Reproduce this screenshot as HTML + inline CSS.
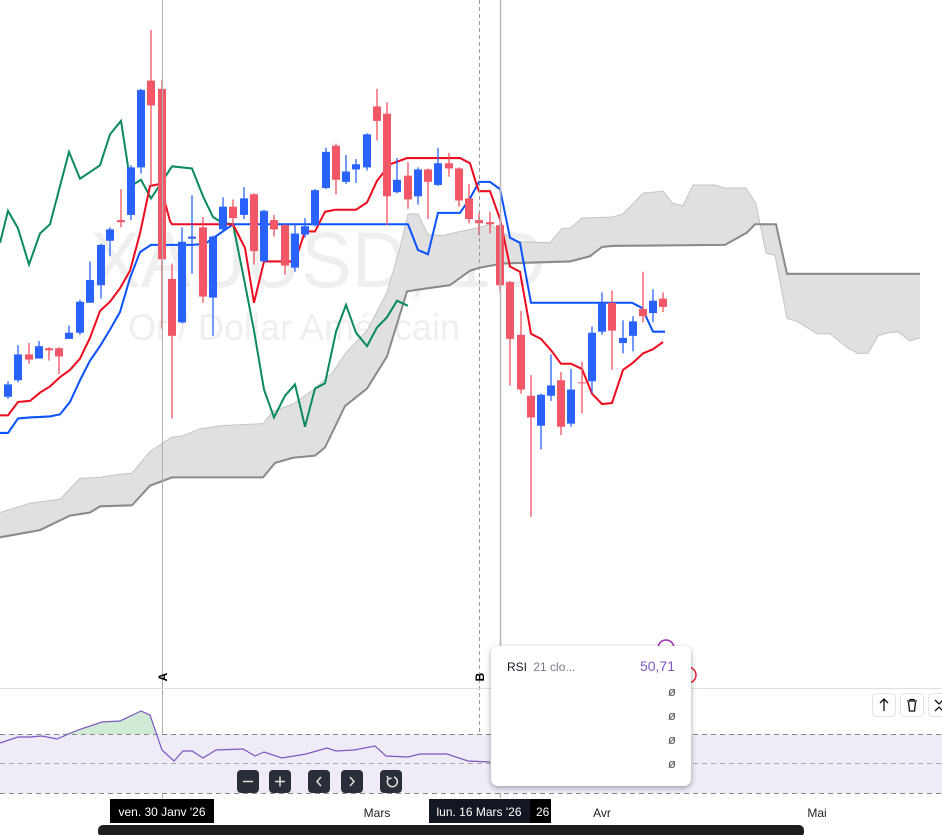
<!DOCTYPE html>
<html><head><meta charset="utf-8"><style>
html,body{margin:0;padding:0;background:#fff;width:942px;height:835px;overflow:hidden;font-family:"Liberation Sans",sans-serif}
svg{position:absolute;left:0;top:0}
.cd rect{stroke:none}
</style></head><body>
<svg width="942" height="835" viewBox="0 0 942 835" xmlns="http://www.w3.org/2000/svg">
<g transform="scale(1 1.0333)">
<text x="90" y="278" font-family="Liberation Sans,sans-serif" font-size="76" fill="#efefef">XAUUSD, 1D</text>
<text x="128" y="329" font-family="Liberation Sans,sans-serif" font-size="36" fill="#efefef">Or / Dollar Américain</text>
<path fill="#e0e0e0" stroke="none" d="M0,496 L20,490 L30,487 L60,483 L80,463 L100,462 L120,459 L132,458 L150,437 L172,423 L182,422 L200,415 L220,412 L263,410 L273,398 L293,391 L315,376 L333,360 L347,340 L367,320 L387,283 L400,240 L408,207 L418,207 L428,227 L443,228 L460,224 L480,220 L490,217 L510,230 L520,234 L550,235 L562,221 L570,221 L582,211 L613,210 L623,207 L633,197 L643,187 L663,185 L673,197 L683,199 L693,179 L715,179 L725,182 L746,182 L756,197 L766,245 L775,247 L787,308 L797,311 L817,323 L830,323 L848,337 L858,342 L868,342 L878,325 L888,322 L898,321 L910,330 L920,327 L920,265 L787,265 L776,217 L755,217 L747,225 L725,237 L612,238 L602,239 L590,248 L570,253 L503,255 L480,259 L470,262 L460,269 L450,276 L420,280 L407,282 L387,345 L367,376 L345,393 L325,433 L315,441 L293,443 L275,448 L263,462 L172,462 L150,470 L132,489 L100,490 L90,496 L70,499 L40,513 L0,520 Z"/>
<path fill="none" stroke="#c4c4c4" stroke-width="1" d="M0,496 L20,490 L30,487 L60,483 L80,463 L100,462 L120,459 L132,458 L150,437 L172,423 L182,422 L200,415 L220,412 L263,410 L273,398 L293,391 L315,376 L333,360 L347,340 L367,320 L387,283 L400,240 L408,207 L418,207 L428,227 L443,228 L460,224 L480,220 L490,217 L510,230 L520,234 L550,235 L562,221 L570,221 L582,211 L613,210 L623,207 L633,197 L643,187 L663,185 L673,197 L683,199 L693,179 L715,179 L725,182 L746,182 L756,197 L766,245 L775,247 L787,308 L797,311 L817,323 L830,323 L848,337 L858,342 L868,342 L878,325 L888,322 L898,321 L910,330 L920,327"/>
<path fill="none" stroke="#8a8a8a" stroke-width="2" d="M0,520 L40,513 L70,499 L90,496 L100,490 L132,489 L150,470 L172,462 L263,462 L275,448 L293,443 L315,441 L325,433 L345,393 L367,376 L387,345 L407,282 L420,280 L450,276 L460,269 L470,262 L480,259 L503,255 L570,253 L590,248 L602,239 L612,238 L725,237 L747,225 L755,217 L776,217 L787,265 L920,265"/>
<polyline fill="none" stroke="#0a8a5e" stroke-width="2" points="0,235 8,204 18,221 29,256 40,226 50,217 69,147 80,173 100,160 110,130 121,117 131,180 141,174 151,192 172,161 192,163 203,190 213,210 223,216 233,217 244,270 254,320 264,377 274,404 285,383 295,372 305,413 315,376 325,371 336,321 346,295 356,322 367,335 377,317 387,307 397,291 408,296"/>
<polyline fill="none" stroke="#0a52ff" stroke-width="2" points="0,419 8,419 18,405 30,404 50,403 60,401 70,389 80,368 90,349 100,335 110,319 120,302 130,269 140,244 151,237 192,237 205,236 233,217 240,217 408,217 418,242 428,246 438,206 460,206 470,192 479,176 490,176 500,183 510,230 520,235 531,293 540,293 632,293 642,298 653,321 665,321"/>
<polyline fill="none" stroke="#ee0a1e" stroke-width="2" points="0,402 8,402 18,389 30,388 40,380 50,374 60,365 70,358 80,347 90,327 100,301 110,292 120,279 130,262 140,226 150,180 160,178 170,214 172,217 233,217 245,240 254,293 264,253 295,253 305,224 315,224 325,205 335,203 356,203 367,196 377,175 390,159 407,153 460,153 470,158 477,180 479,185 490,185 500,212 510,258 520,263 531,323 541,328 551,339 561,352 571,352 582,357 592,381 602,391 612,390 623,358 633,351 643,342 653,338 663,331"/>
<g stroke-width="1.3" class="cd">
<g fill="#2962ff" stroke="#2962ff">
<line x1="8" y1="369" x2="8" y2="386"/><rect x="4" y="372" width="8" height="12"/>
<line x1="18" y1="334" x2="18" y2="370"/><rect x="14" y="343" width="8" height="25"/>
<line x1="39" y1="330" x2="39" y2="347"/><rect x="35" y="335" width="8" height="12"/>
<line x1="69" y1="315" x2="69" y2="328"/><rect x="65" y="322" width="8" height="6"/>
<line x1="80" y1="290" x2="80" y2="324"/><rect x="76" y="292" width="8" height="30"/>
<line x1="90" y1="253" x2="90" y2="293"/><rect x="86" y="271" width="8" height="22"/>
<line x1="101" y1="236" x2="101" y2="289"/><rect x="97" y="237" width="8" height="39"/>
<line x1="110" y1="220" x2="110" y2="248"/><rect x="106" y="222" width="8" height="11"/>
<line x1="131" y1="160" x2="131" y2="213"/><rect x="127" y="162" width="8" height="46"/>
<line x1="141" y1="86" x2="141" y2="168"/><rect x="137" y="87" width="8" height="75"/>
<line x1="182" y1="220" x2="182" y2="313"/><rect x="178" y="234" width="8" height="78"/>
<line x1="192" y1="189" x2="192" y2="265"/><rect x="188" y="229" width="8" height="2"/>
<line x1="213" y1="228" x2="213" y2="325"/><rect x="209" y="229" width="8" height="59"/>
<line x1="223" y1="191" x2="223" y2="225"/><rect x="219" y="200" width="8" height="22"/>
<line x1="244" y1="181" x2="244" y2="212"/><rect x="240" y="192" width="8" height="16"/>
<line x1="264" y1="203" x2="264" y2="254"/><rect x="260" y="204" width="8" height="49"/>
<line x1="295" y1="216" x2="295" y2="263"/><rect x="291" y="226" width="8" height="33"/>
<line x1="305" y1="211" x2="305" y2="230"/><rect x="301" y="219" width="8" height="8"/>
<line x1="315" y1="183" x2="315" y2="219"/><rect x="311" y="184" width="8" height="34"/>
<line x1="326" y1="143" x2="326" y2="183"/><rect x="322" y="147" width="8" height="35"/>
<line x1="346" y1="150" x2="346" y2="178"/><rect x="342" y="166" width="8" height="10"/>
<line x1="356" y1="154" x2="356" y2="177"/><rect x="352" y="159" width="8" height="5"/>
<line x1="367" y1="129" x2="367" y2="165"/><rect x="363" y="130" width="8" height="32"/>
<line x1="397" y1="153" x2="397" y2="187"/><rect x="393" y="174" width="8" height="12"/>
<line x1="418" y1="162" x2="418" y2="198"/><rect x="414" y="164" width="8" height="26"/>
<line x1="438" y1="143" x2="438" y2="180"/><rect x="434" y="158" width="8" height="21"/>
<line x1="541" y1="381" x2="541" y2="435"/><rect x="537" y="382" width="8" height="30"/>
<line x1="551" y1="343" x2="551" y2="388"/><rect x="547" y="373" width="8" height="10"/>
<line x1="571" y1="357" x2="571" y2="413"/><rect x="567" y="377" width="8" height="33"/>
<line x1="592" y1="316" x2="592" y2="380"/><rect x="588" y="322" width="8" height="47"/>
<line x1="602" y1="283" x2="602" y2="324"/><rect x="598" y="293" width="8" height="28"/>
<line x1="623" y1="310" x2="623" y2="342"/><rect x="619" y="327" width="8" height="5"/>
<line x1="633" y1="306" x2="633" y2="340"/><rect x="629" y="311" width="8" height="14"/>
<line x1="653" y1="280" x2="653" y2="312"/><rect x="649" y="291" width="8" height="12"/>
</g>
<g fill="#f25767" stroke="#f05060">
<line x1="29" y1="332" x2="29" y2="352"/><rect x="25" y="343" width="8" height="5"/>
<line x1="49" y1="336" x2="49" y2="349"/><rect x="45" y="337" width="8" height="2"/>
<line x1="59" y1="336" x2="59" y2="362"/><rect x="55" y="337" width="8" height="8"/>
<line x1="121" y1="183" x2="121" y2="220"/><rect x="117" y="213" width="8" height="2"/>
<line x1="151" y1="29" x2="151" y2="180"/><rect x="147" y="78" width="8" height="24"/>
<line x1="162" y1="77" x2="162" y2="318"/><rect x="158" y="86" width="8" height="165"/>
<line x1="172" y1="255" x2="172" y2="405"/><rect x="168" y="270" width="8" height="55"/>
<line x1="203" y1="210" x2="203" y2="293"/><rect x="199" y="220" width="8" height="67"/>
<line x1="233" y1="193" x2="233" y2="220"/><rect x="229" y="200" width="8" height="11"/>
<line x1="254" y1="187" x2="254" y2="256"/><rect x="250" y="188" width="8" height="55"/>
<line x1="274" y1="208" x2="274" y2="229"/><rect x="270" y="213" width="8" height="9"/>
<line x1="285" y1="217" x2="285" y2="266"/><rect x="281" y="218" width="8" height="39"/>
<line x1="336" y1="139" x2="336" y2="188"/><rect x="332" y="141" width="8" height="33"/>
<line x1="377" y1="86" x2="377" y2="136"/><rect x="373" y="103" width="8" height="14"/>
<line x1="387" y1="99" x2="387" y2="218"/><rect x="383" y="110" width="8" height="80"/>
<line x1="408" y1="157" x2="408" y2="202"/><rect x="404" y="170" width="8" height="23"/>
<line x1="428" y1="163" x2="428" y2="212"/><rect x="424" y="164" width="8" height="12"/>
<line x1="449" y1="148" x2="449" y2="171"/><rect x="445" y="158" width="8" height="5"/>
<line x1="459" y1="162" x2="459" y2="200"/><rect x="455" y="163" width="8" height="31"/>
<line x1="469" y1="178" x2="469" y2="216"/><rect x="465" y="192" width="8" height="20"/>
<line x1="479" y1="206" x2="479" y2="228"/><rect x="475" y="213" width="8" height="3"/>
<line x1="490" y1="205" x2="490" y2="226"/><rect x="486" y="215" width="8" height="2"/>
<line x1="500" y1="217" x2="500" y2="283"/><rect x="496" y="218" width="8" height="58"/>
<line x1="510" y1="272" x2="510" y2="373"/><rect x="506" y="273" width="8" height="55"/>
<line x1="521" y1="301" x2="521" y2="381"/><rect x="517" y="324" width="8" height="53"/>
<line x1="531" y1="363" x2="531" y2="500"/><rect x="527" y="383" width="8" height="21"/>
<line x1="561" y1="360" x2="561" y2="421"/><rect x="557" y="368" width="8" height="45"/>
<line x1="582" y1="350" x2="582" y2="400"/><rect x="578" y="370" width="8" height="1"/>
<line x1="612" y1="281" x2="612" y2="358"/><rect x="608" y="293" width="8" height="27"/>
<line x1="643" y1="263" x2="643" y2="312"/><rect x="639" y="299" width="8" height="7"/>
<line x1="663" y1="283" x2="663" y2="302"/><rect x="659" y="289" width="8" height="8"/>
</g>
</g>
</g>
<line x1="162.5" y1="0" x2="162.5" y2="798" stroke="#b0b0b0" stroke-width="1"/>
<line x1="479.5" y1="0" x2="479.5" y2="798" stroke="#9a9a9a" stroke-width="1" stroke-dasharray="4 3"/>
<line x1="500.5" y1="0" x2="500.5" y2="798" stroke="#b8b8b8" stroke-width="1.5"/>
<circle cx="666" cy="648" r="8" fill="#fff" stroke="#9c27b0" stroke-width="1.5"/>
<circle cx="688" cy="675" r="8" fill="#fff" stroke="#e91e3c" stroke-width="1.5"/>
<text transform="translate(167,677) rotate(-90)" font-size="12" font-weight="bold" fill="#000" text-anchor="middle">A</text>
<text transform="translate(484,677) rotate(-90)" font-size="12" font-weight="bold" fill="#000" text-anchor="middle">B</text>
<line x1="0" y1="688.5" x2="942" y2="688.5" stroke="#e0dcef" stroke-width="1"/>
<rect x="0" y="734" width="942" height="59" fill="#efecf8"/>
<line x1="0" y1="734.5" x2="942" y2="734.5" stroke="#888" stroke-dasharray="5 4"/>
<line x1="0" y1="763.5" x2="942" y2="763.5" stroke="#aaa" stroke-dasharray="5 4"/>
<line x1="0" y1="793.5" x2="942" y2="793.5" stroke="#888" stroke-dasharray="5 4"/>
<path d="M62,734 L78,730 L102,722 L120,721 L141,711 L150,715 L156,734 Z" fill="#cfead5"/>
<polyline fill="none" stroke="#7e57c2" stroke-width="1.2" points="0,743 18,737 30,737 42,736 57,739 78,730 102,722 120,721 141,711 150,715 162,750 174,761 183,751 192,751 203,758 216,750 243,749 255,756 264,752 282,758 306,754 327,748 336,751 354,750 375,746 386,756 408,757 420,754 447,754 468,761 490,762"/>
<g fill="#2a2e39">
<rect x="237" y="770" width="22" height="23" rx="4"/>
<rect x="269" y="770" width="22" height="23" rx="4"/>
<rect x="308" y="770" width="22" height="23" rx="4"/>
<rect x="341" y="770" width="22" height="23" rx="4"/>
<rect x="380" y="770" width="22" height="23" rx="4"/>
</g>
<g stroke="#e0e0e0" stroke-width="1.5" fill="none">
<line x1="243" y1="781.5" x2="253" y2="781.5"/>
<line x1="275" y1="781.5" x2="285" y2="781.5"/><line x1="280" y1="776.5" x2="280" y2="786.5"/>
<polyline points="321,777 317,781.5 321,786"/>
<polyline points="350,777 354,781.5 350,786"/>
<path d="M394,777 A5,5 0 1 1 388.5,778.5"/><polyline points="387,776 388.5,779 391.5,778"/>
</g>
<rect x="110" y="799" width="104" height="24" fill="#000"/>
<text x="162" y="816" font-size="12" fill="#fff" text-anchor="middle">ven. 30 Janv '26</text>
<text x="377" y="817" font-size="12" fill="#222" text-anchor="middle">Mars</text>
<rect x="429" y="799" width="101" height="24" fill="#131722"/>
<rect x="530" y="799" width="21" height="24" fill="#000"/>
<text x="479" y="816" font-size="12" fill="#fff" text-anchor="middle">lun. 16 Mars '26</text>
<text x="536" y="816" font-size="12" fill="#fff">26</text>
<text x="602" y="817" font-size="12" fill="#222" text-anchor="middle">Avr</text>
<text x="817" y="817" font-size="12" fill="#222" text-anchor="middle">Mai</text>
<rect x="98" y="825" width="706" height="12" rx="5" fill="#1e1e1e"/>
<g fill="#fff" stroke="#e4e4e4">
<rect x="872.5" y="693.5" width="23" height="23" rx="4"/>
<rect x="900.5" y="693.5" width="23" height="23" rx="4"/>
<rect x="928.5" y="693.5" width="23" height="23" rx="4"/>
</g>
<g stroke="#111" stroke-width="1.3" fill="none">
<line x1="884" y1="699" x2="884" y2="711"/><polyline points="880,703 884,699 888,703"/>
<path d="M907,701 h10 M910,701 v-1.5 h4 v1.5 M908.5,702 l1,9 h5 l1,-9"/>
<path d="M935,700 l4,4 l4,-4 M935,711 l4,-4 l4,4"/>
</g>
</svg>
<div style="position:absolute;left:491px;top:646px;width:200px;height:140px;background:#fff;border-radius:7px;box-shadow:0 2px 6px rgba(0,0,0,0.35);font-size:12px">
<div style="position:absolute;left:16px;top:14px;color:#131722">RSI <span style="color:#787b86;margin-left:3px">21 clo...</span></div>
<div style="position:absolute;right:16px;top:12px;color:#7e57c2;font-size:14px">50,71</div>
<div style="position:absolute;right:15px;top:38px;color:#555;font-size:13px">ø</div>
<div style="position:absolute;right:15px;top:62px;color:#555;font-size:13px">ø</div>
<div style="position:absolute;right:15px;top:86px;color:#555;font-size:13px">ø</div>
<div style="position:absolute;right:15px;top:110px;color:#555;font-size:13px">ø</div>
</div>
</body></html>
